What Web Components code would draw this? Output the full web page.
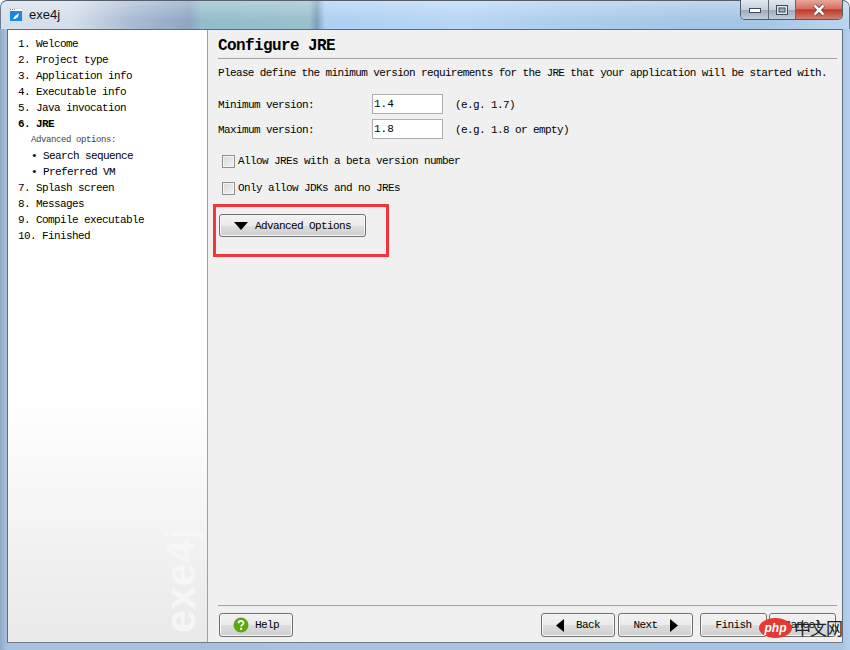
<!DOCTYPE html>
<html><head><meta charset="utf-8">
<style>
html,body{margin:0;padding:0;background:#fff}
body{font-family:"Liberation Mono",monospace;font-size:11px;letter-spacing:-.6px;color:#000;width:850px;height:650px;overflow:hidden}
</style></head><body>
<win-frame title-text="exe4j">
  <wizard-nav slot="nav">
    <nav-item num="1.">Welcome</nav-item>
    <nav-item num="2.">Project type</nav-item>
    <nav-item num="3.">Application info</nav-item>
    <nav-item num="4.">Executable info</nav-item>
    <nav-item num="5.">Java invocation</nav-item>
    <nav-item num="6." current>JRE</nav-item>
    <nav-note>Advanced options:</nav-note>
    <nav-sub>Search sequence</nav-sub>
    <nav-sub>Preferred VM</nav-sub>
    <nav-item num="7.">Splash screen</nav-item>
    <nav-item num="8.">Messages</nav-item>
    <nav-item num="9.">Compile executable</nav-item>
    <nav-item num="10.">Finished</nav-item>
  </wizard-nav>
  <jre-page slot="main"></jre-page>
</win-frame>
<script>
function def(name,html,init){
  customElements.define(name,class extends HTMLElement{
    constructor(){super();this.attachShadow({mode:'open'}).innerHTML=html;}
    connectedCallback(){if(init)init.call(this,this.shadowRoot);}
  });
}
def('win-frame',`<style>
:host{display:flex;flex-direction:column;width:850px;height:650px;box-sizing:border-box;position:relative;overflow:hidden;border-radius:7px 7px 0 0;
 background:linear-gradient(90deg,#8fa9c9 0,#a9c0da 7px,#a8c4e2 840px,#b5d0ec 850px)}
.bar{height:29px;flex:none;display:flex;align-items:flex-start;position:relative;box-sizing:border-box;border-top:1px solid #55606c;border-left:1px solid #6d7a88;border-right:1px solid #6d7a88;border-radius:7px 7px 0 0;
 background:linear-gradient(180deg,rgba(255,255,255,.3),rgba(255,255,255,0) 70%),linear-gradient(90deg,#d6e0ec 0,#d4dfeb 70px,#a9bcd4 130px,#8ea6c3 188px,#91aec6 194px,#93bdca 200px,#99c0cd 308px,#7f9fbc 316px,#aed0f4 324px,#b8d6f6 460px,#aeceee 560px,#a5c5e6 700px,#a6c6e6 760px,#bcd6f0 850px)}
.icon{margin:7px 0 0 8px;flex:none}
.t{font:13px "Liberation Sans",sans-serif;letter-spacing:0;margin:6px 0 0 6px;color:#111;line-height:16px}
.ctl{position:absolute;right:6px;top:-1px;height:20px;width:103px;box-sizing:border-box;display:flex;border:1px solid #4f5c6a;border-top:0;border-radius:0 0 5px 5px;overflow:hidden}
.ctl div{display:flex;align-items:center;justify-content:center;box-sizing:border-box}
.min{width:28px;background:linear-gradient(180deg,#e0e8f0 0,#c4d0dc 50%,#9aa9ba 52%,#c2cedb 100%);border-right:1px solid #5c6a79}
.max{width:27px;background:linear-gradient(180deg,#e0e8f0 0,#c4d0dc 50%,#9aa9ba 52%,#c2cedb 100%);border-right:1px solid #5c6a79}
.cls{flex:1;background:linear-gradient(180deg,#e8a89c 0,#d4705f 45%,#bf3a26 52%,#d08070 100%)}
.body{flex:1;min-height:0;display:flex;margin:0 7px 7px 7px;border:1px solid #5d6b7a;border-bottom-color:#6d7b8c;border-radius:1px}
.nav{width:199px;flex:none;border-right:1px solid #a0a0a0;background:linear-gradient(180deg,#fff 0,#fff 60%,#e9e9e9 100%);position:relative;overflow:hidden}
.main{flex:1;min-width:0;background:#f0f0f0;display:flex}
.wm{position:absolute;left:193px;bottom:9px;width:104px;height:40px;transform-origin:0 100%;transform:rotate(-90deg);font:bold 42px/40px "Liberation Sans",sans-serif;letter-spacing:0;color:#f6f6f6;white-space:nowrap}
.php{position:absolute;left:759px;top:614px;width:84px;height:28px;display:flex;align-items:center}
.ph{width:33px;height:20px;border-radius:50%;background:#e53a2f;color:#fff;font:italic bold 12px/20px "Liberation Sans",sans-serif;letter-spacing:0;text-align:center;flex:none}
.cn{font:17px/24px "Noto Sans CJK SC",sans-serif;letter-spacing:-1px;color:#222;margin-left:2px;white-space:nowrap}
</style>
<div class="bar">
 <svg class="icon" width="14" height="14" viewBox="0 0 14 14"><rect x=".5" y=".5" width="13" height="13" fill="#fff" stroke="#d8dfe8"/><rect x="1" y="3" width="12" height="10" fill="#1b87e0"/><path d="M1 1.5h1M3 1.5h1M5 1.5h1" stroke="#e8562c"/><path d="M4 11l2-3 4-3-1 4-3 2z" fill="#fff"/></svg>
 <span class="t"></span>
 <div class="ctl">
  <div class="min"><svg width="12" height="6" viewBox="0 0 12 6"><rect x=".5" y="1.5" width="11" height="4" fill="#fff" stroke="#3f4a57"/></svg></div>
  <div class="max"><svg width="12" height="10" viewBox="0 0 12 10"><rect x=".5" y=".5" width="11" height="9" fill="#dfe6ee" stroke="#3f4a57"/><rect x="3" y="3" width="6" height="4" fill="#9fb0c2" stroke="#3f4a57" stroke-width="1"/></svg></div>
  <div class="cls"><svg width="14" height="12" viewBox="0 0 14 12"><path d="M2.5 1.5l9 9M11.5 1.5l-9 9" stroke="#5a2a28" stroke-width="4"/><path d="M2.5 1.5l9 9M11.5 1.5l-9 9" stroke="#fff" stroke-width="2.6"/></svg></div>
 </div>
</div>
<div class="body">
 <div class="nav"><slot name="nav"></slot><div class="wm">exe4j</div></div>
 <div class="main"><slot name="main"></slot></div>
</div>
<div class="php"><span class="ph">php</span><span class="cn">中文网</span></div>`,
function(r){r.querySelector('.t').textContent=this.getAttribute('title-text');});

def('wizard-nav',`<style>:host{display:block;padding:6px 0 0 10px;position:relative;z-index:1}</style><slot></slot>`);
def('nav-item',`<style>:host{display:block;height:16px;line-height:16px;white-space:pre}
:host([current]){font-weight:bold}</style><span class="n"></span> <slot></slot>`,
function(r){r.querySelector('.n').textContent=this.getAttribute('num');});
def('nav-note',`<style>:host{display:block;height:16px;line-height:16px;padding-left:13px;font-size:9px;letter-spacing:-.4px;color:#444}</style><slot></slot>`);
def('nav-sub',`<style>:host{display:block;height:16px;line-height:16px;padding-left:13px;white-space:pre}</style>• <slot></slot>`);

def('hr-line',`<style>:host{display:block;height:1px;background:#a0a0a0;flex:none}</style>`);
def('text-box',`<style>:host{display:block;width:71px;height:20px;box-sizing:border-box;border:1px solid #abadb3;background:#fff;line-height:18px;padding-left:1px;letter-spacing:0;font-size:11px}</style><slot></slot>`);
def('form-row',`<style>:host{display:flex;align-items:center;height:20px;padding-top:0}
.l{width:154px;flex:none;position:relative;top:1px}.h{margin-left:12px;position:relative;top:1px}</style><span class="l"><slot name="label"></slot></span><slot name="field"></slot><span class="h"><slot name="hint"></slot></span>`);
def('check-row',`<style>:host{display:flex;align-items:center;height:14px;padding-left:4px;gap:3px}
.b{width:13px;height:13px;box-sizing:border-box;border:1px solid #8e8f8f;background:linear-gradient(135deg,#d8d8d8,#f2f2f2);box-shadow:inset 0 0 0 1px #f4f4f4;flex:none}
.x{line-height:16px}</style><span class="b"></span><span class="x"><slot></slot></span>`);
def('wiz-button',`<style>:host{display:inline-flex;align-items:center;justify-content:center;box-sizing:border-box;height:24px;border:1px solid #707070;border-radius:3px;
 background:linear-gradient(180deg,#f2f2f2 0,#ebebeb 50%,#dddddd 52%,#cfcfcf 100%);box-shadow:inset 0 0 0 1px #f6f6f6;gap:6px;white-space:pre;flex:none}</style><slot></slot>`);

def('jre-page',`<style>
:host{display:flex;flex-direction:column;flex:1;box-sizing:border-box;padding:6px 5px 5px 10px;min-width:0}
h1{margin:0;font-size:16px;font-weight:bold;letter-spacing:-.6px;line-height:20px;height:22px;flex:none}
.intro{margin:7px 0 0;line-height:14px;white-space:pre;letter-spacing:-.63px}
.f1{margin-top:14px}.f2{margin-top:5px}
.c1{margin-top:15px}.c2{margin-top:13px}
.adv{margin:19px 0 0 1px;align-self:flex-start;width:147px;height:23px;gap:7px}
.sp{flex:1}
.foot{display:flex;margin-top:7px;padding-left:1px;padding-right:1px;align-items:center}
.gap{flex:1}
.red{position:absolute;left:213px;top:204px;width:176px;height:53px;box-sizing:border-box;border:3px solid #f5333a;pointer-events:none}
.help{width:74px}.back{width:74px}.next{width:75px;margin-left:3px}.fin{width:67px;margin-left:7px}.can{width:67px;margin-left:2px}
</style>
<h1>Configure JRE</h1>
<hr-line></hr-line>
<p class="intro">Please define the minimum version requirements for the JRE that your application will be started with.</p>
<form-row class="f1"><span slot="label">Minimum version:</span><text-box slot="field">1.4</text-box><span slot="hint">(e.g. 1.7)</span></form-row>
<form-row class="f2"><span slot="label">Maximum version:</span><text-box slot="field">1.8</text-box><span slot="hint">(e.g. 1.8 or empty)</span></form-row>
<check-row class="c1">Allow JREs with a beta version number</check-row>
<check-row class="c2">Only allow JDKs and no JREs</check-row>
<wiz-button class="adv"><svg width="14" height="8" viewBox="0 0 14 8"><path d="M0 0h14L7 8z"/></svg><span>Advanced Options</span></wiz-button>
<div class="sp"></div>
<hr-line></hr-line>
<div class="foot">
 <wiz-button class="help"><svg width="16" height="16" viewBox="0 0 16 16"><circle cx="8" cy="8" r="7.5" fill="#5aa90f"/><path d="M5.6 6.2c0-3 4.9-3 4.9-.2 0 1.8-2.4 1.8-2.4 3.6" fill="none" stroke="#fff" stroke-width="1.8"/><rect x="7.1" y="10.8" width="2" height="2" fill="#fff"/></svg><span>Help</span></wiz-button>
 <span class="gap"></span>
 <wiz-button class="back"><svg width="8" height="13" viewBox="0 0 8 13"><path d="M8 0v13L0 6.5z"/></svg><span> Back</span></wiz-button>
 <wiz-button class="next"><span>Next </span><svg width="8" height="13" viewBox="0 0 8 13"><path d="M0 0v13l8-6.5z"/></svg></wiz-button>
 <wiz-button class="fin">Finish</wiz-button>
 <wiz-button class="can">Cancel</wiz-button>
</div>
<div class="red"></div>`);
</script>
</body></html>
